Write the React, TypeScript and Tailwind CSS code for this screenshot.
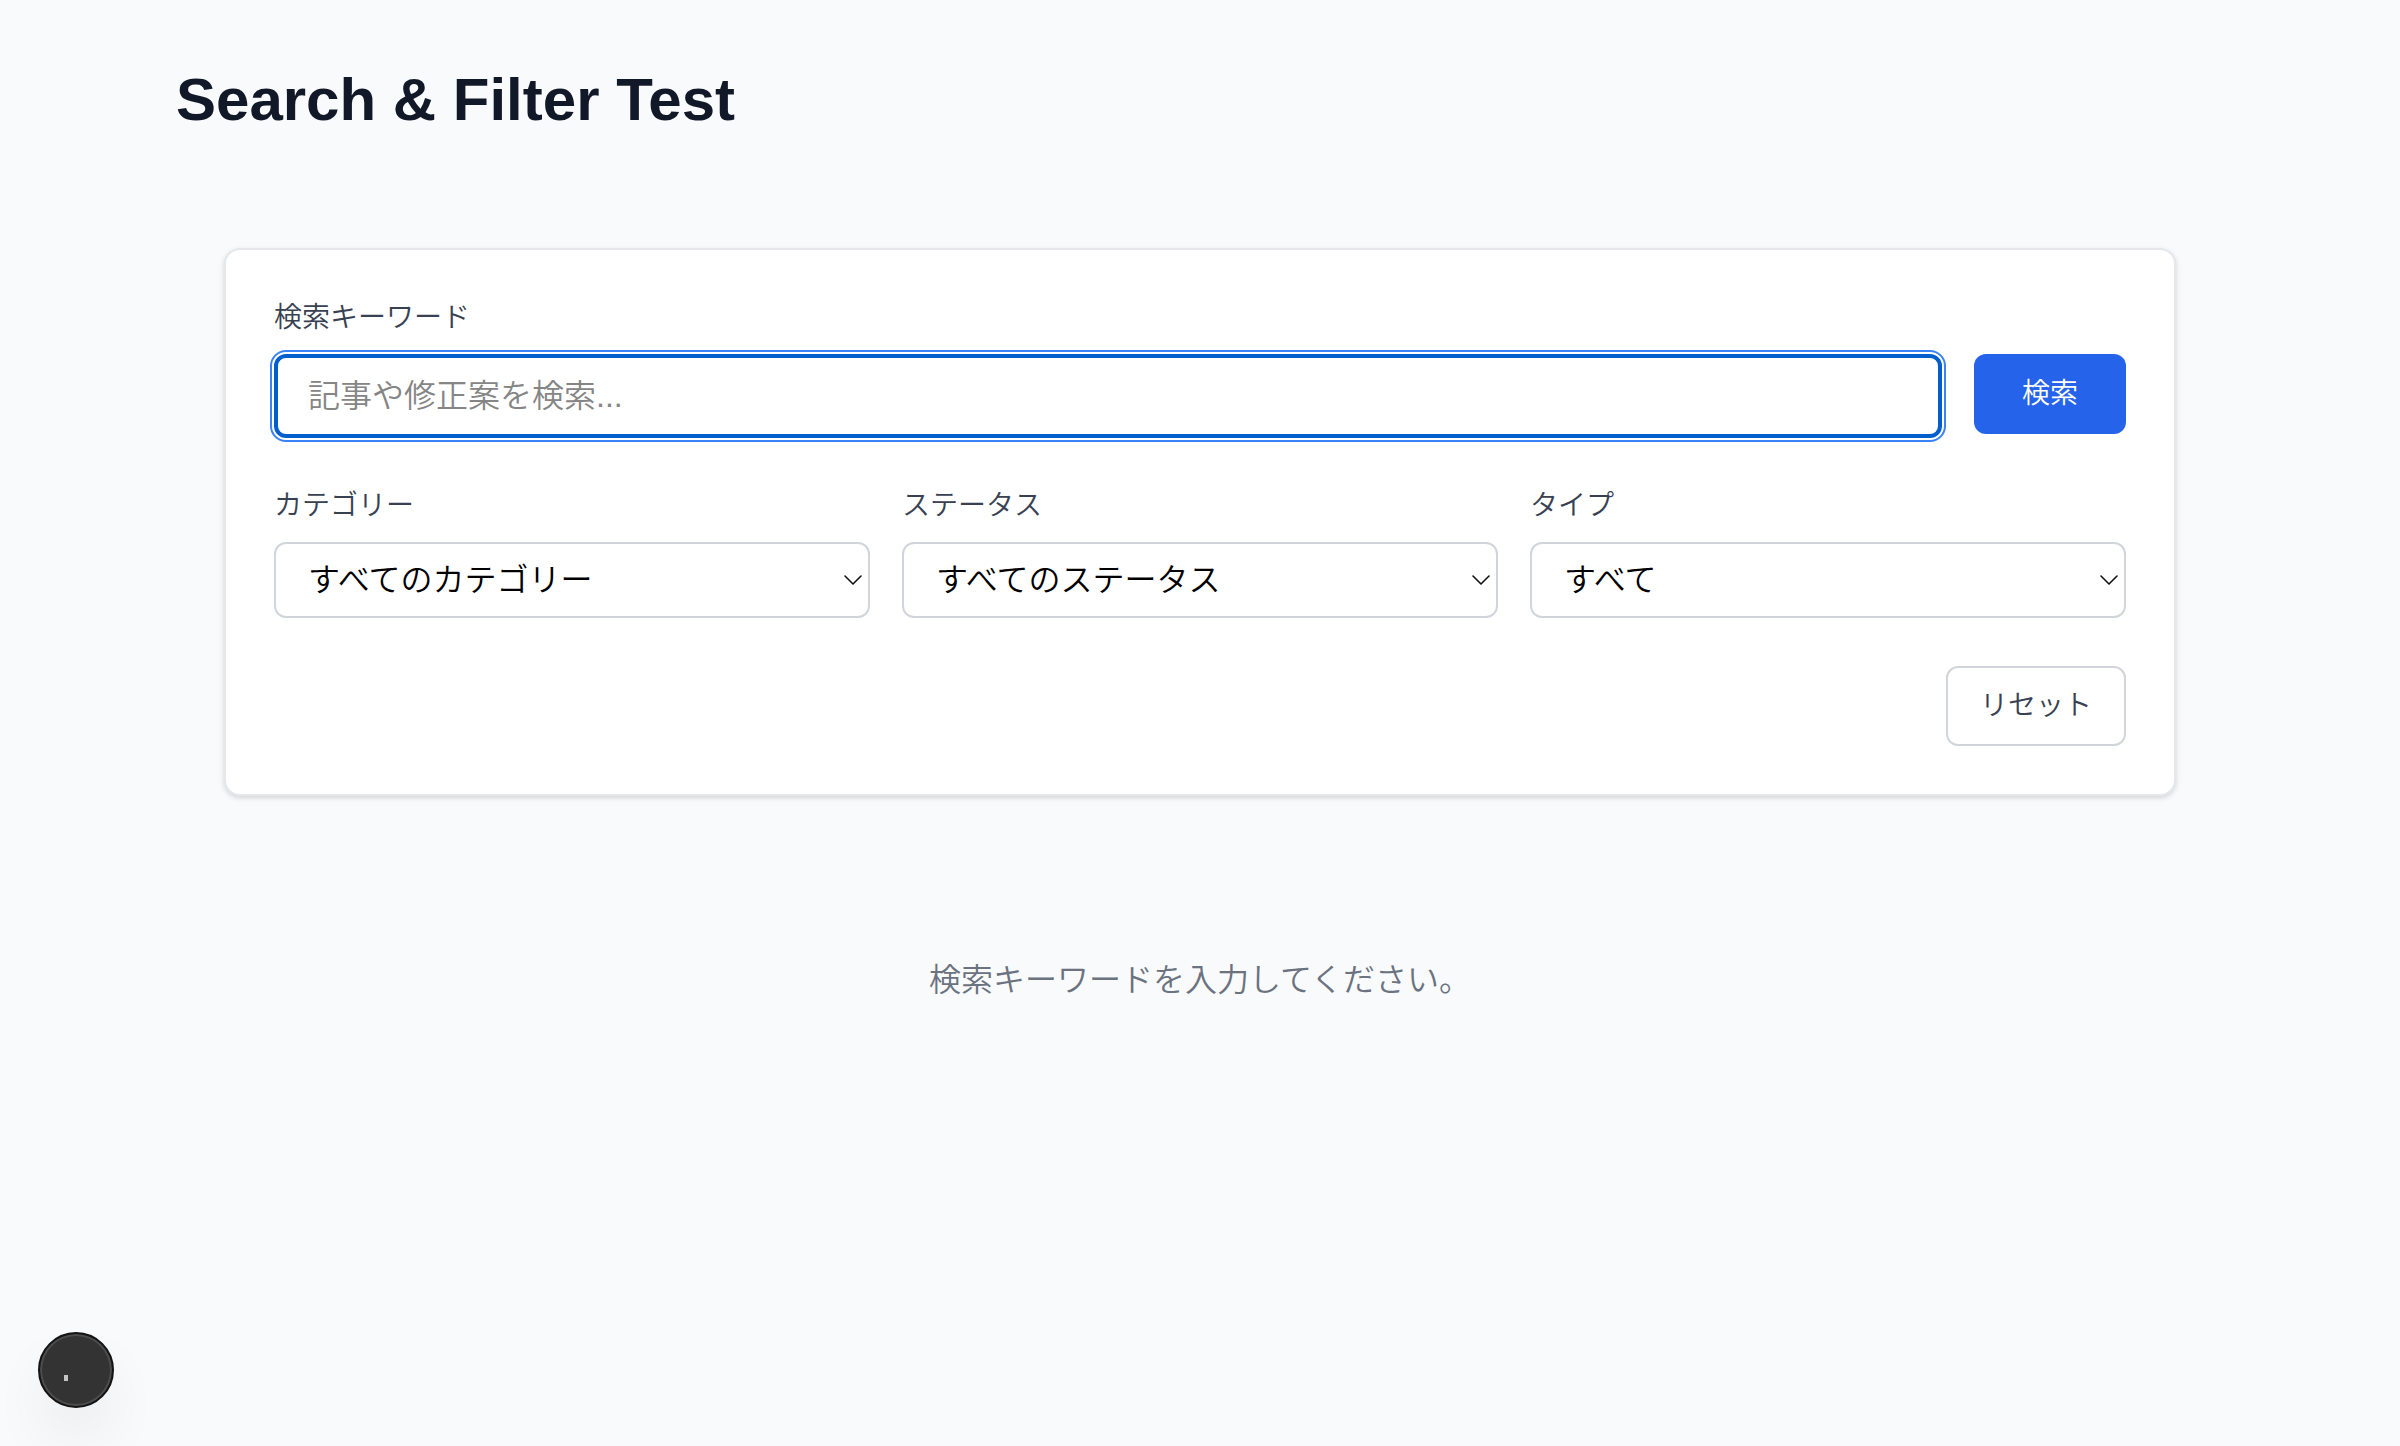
import { useId } from "react";

type FilterSelectProps = {
  label: string;
  options: string[];
};

function FilterSelect({ label, options }: FilterSelectProps) {
  const id = useId();
  return (
    <div className="flex min-w-0 flex-1 flex-col gap-4">
      <label htmlFor={id} className="text-[28px] leading-10 text-[#374151]">
        {label}
      </label>
      <div className="relative">
        <select
          id={id}
          className="block h-[76px] w-full appearance-none rounded-xl border-2 border-[#d1d5db] bg-white pr-12 pl-8 text-[32px] text-black"
        >
          {options.map((option) => (
            <option key={option}>{option}</option>
          ))}
        </select>
        <svg
          className="pointer-events-none absolute top-1/2 right-2 h-3 w-[18px] -translate-y-1/2"
          viewBox="0 0 18 12"
          fill="none"
          stroke="#111111"
          strokeWidth="1.6"
          strokeLinecap="round"
          strokeLinejoin="round"
          aria-hidden="true"
        >
          <path d="M1 2 9 10l8-8" />
        </svg>
      </div>
    </div>
  );
}

export default function App() {
  return (
    <div className="min-h-screen bg-[#f9fafc] font-['Liberation_Sans','Noto_Sans_CJK_JP',sans-serif] font-[350]">
      <main className="mx-auto max-w-[2048px] py-16">
        <h1 className="text-6xl leading-[72px] font-bold text-[#111827]">Search &amp; Filter Test</h1>

        <div className="mt-16 p-12">
          <form
            className="flex flex-col gap-12 rounded-2xl border-2 border-[#e5e7eb] bg-white p-12 shadow-[0_2px_6px_rgba(0,0,0,0.1),0_2px_4px_rgba(0,0,0,0.06)]"
            onSubmit={(event) => event.preventDefault()}
          >
            <div className="flex flex-col gap-4">
              <label htmlFor="keyword" className="text-[28px] leading-10 text-[#374151]">
                検索キーワード
              </label>
              <div className="flex items-start gap-8">
                <input
                  id="keyword"
                  type="text"
                  placeholder="記事や修正案を検索..."
                  className="h-[84px] min-w-0 flex-1 rounded-xl border-4 border-[#005fcc] bg-white px-[30px] text-[32px] text-black outline-2 outline-offset-2 outline-[#3b82f6] placeholder:text-[#858585]"
                />
                <button type="submit" className="h-20 rounded-xl bg-[#2563eb] px-12 text-[28px] text-white">
                  検索
                </button>
              </div>
            </div>

            <div className="flex gap-8">
              <FilterSelect label="カテゴリー" options={["すべてのカテゴリー"]} />
              <FilterSelect label="ステータス" options={["すべてのステータス"]} />
              <FilterSelect label="タイプ" options={["すべて"]} />
            </div>

            <div className="flex justify-end">
              <button
                type="reset"
                className="h-20 rounded-xl border-2 border-[#d1d5db] bg-white px-8 text-[28px] text-[#374151]"
              >
                リセット
              </button>
            </div>
          </form>

          <p className="pt-40 text-center text-[32px] leading-[48px] text-[#6b7280]">
            検索キーワードを入力してください。
          </p>
        </div>
      </main>

      <button
        type="button"
        aria-label="Open developer tools"
        className="fixed bottom-[38px] left-[38px] flex size-[76px] items-center justify-center rounded-full border-2 border-[#141414] bg-[#333333] shadow-[inset_0_0_0_2px_#4d4d4d,0_32px_64px_-16px_rgba(0,0,0,0.16)]"
      >
        <svg className="size-10" viewBox="0 0 40 40" aria-hidden="true">
          <rect x="8" y="25" width="4" height="6" fill="#c4c4c4" />
        </svg>
      </button>
    </div>
  );
}
